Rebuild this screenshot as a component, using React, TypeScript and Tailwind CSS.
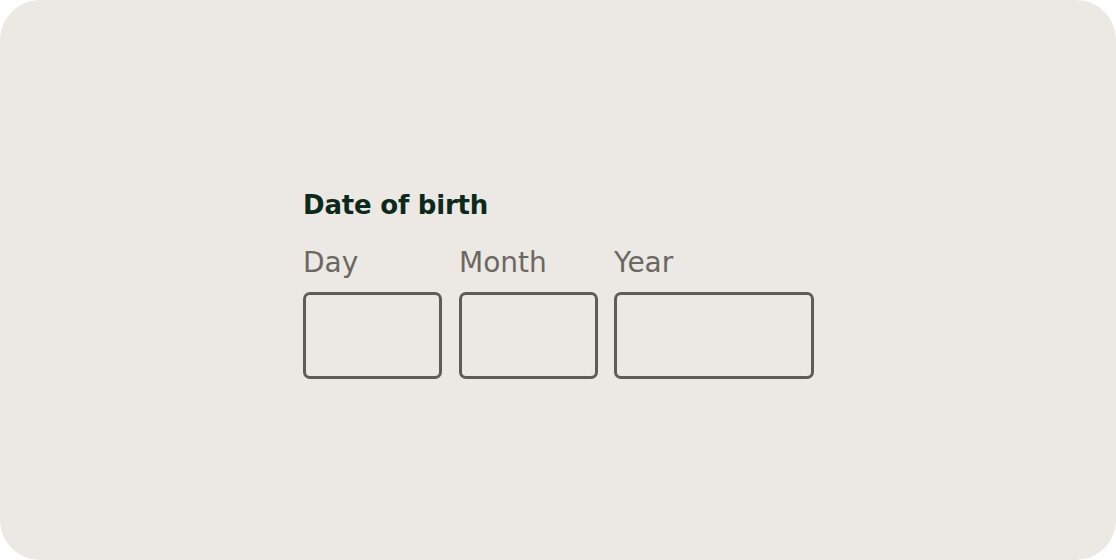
const fields = [
  { label: 'Day', width: 'w-[139px]', shift: '' },
  { label: 'Month', width: 'w-[139px]', shift: '' },
  { label: 'Year', width: 'w-[200px]', shift: '-ml-px' },
]

export default function App() {
  return (
    <div className="w-[1116px] h-[560px] bg-white">
      <div
        className="w-full h-full bg-[#ece9e4] rounded-[40px] pl-[303px] pt-[189px]"
        style={{ fontFamily: '"DejaVu Sans", sans-serif' }}
      >
        <h1 className="text-[26px] leading-[32px] font-bold text-[#0c2a1c] tracking-[-0.2px]">
          Date of birth
        </h1>
        <div className="flex gap-[17px] mt-[25px]">
          {fields.map(({ label, width, shift }) => (
            <label key={label} className={`flex flex-col ${shift}`}>
              <span className="text-[28px] leading-[34px] text-[#6b6762]">{label}</span>
              <input
                type="text"
                className={`${width} h-[87px] mt-[12px] border-[3px] border-[#5f5b56] rounded-[7px] bg-transparent outline-none`}
              />
            </label>
          ))}
        </div>
      </div>
    </div>
  )
}
